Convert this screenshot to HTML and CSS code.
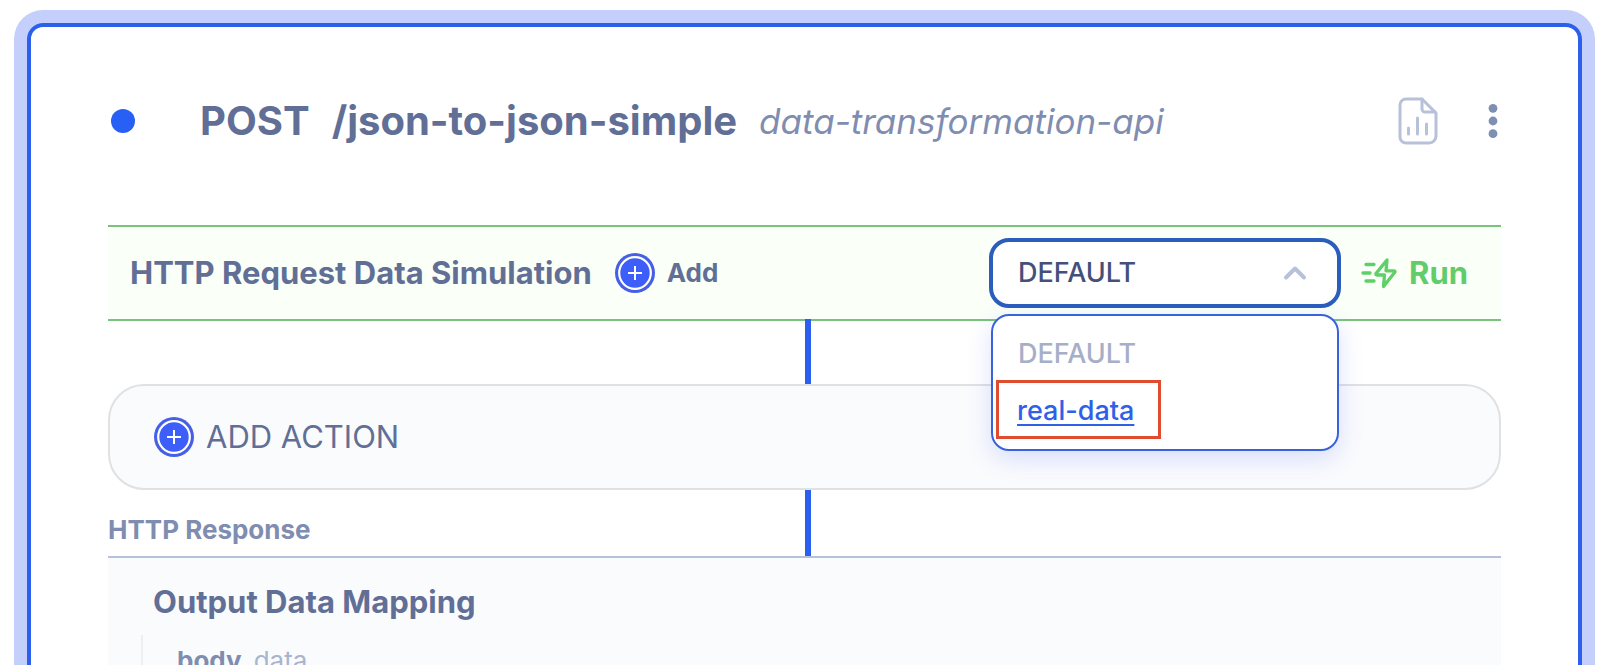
FILE: index.html
```html
<!DOCTYPE html>
<html lang="en">
<head>
<meta charset="utf-8">
<meta name="viewport" content="width=device-width, initial-scale=1">
<title>POST /json-to-json-simple</title>
<link rel="stylesheet" href="styles.css">
</head>
<body>
<main class="card">
  <header class="card-header">
    <span class="status-dot"></span>
    <h1 class="endpoint"><span>POST</span><span>/json-to-json-simple</span></h1>
    <em class="api-name">data-transformation-api</em>
    <div class="header-actions">
      <button class="icon-button" type="button" aria-label="Report">
        <svg width="40" height="48" viewBox="0 0 40 48" fill="none" stroke="#b7c1da" stroke-width="3" stroke-linecap="round" stroke-linejoin="round">
          <path d="M8 2H24L38 16V39a7 7 0 0 1-7 7H8a6 6 0 0 1-6-6V8a6 6 0 0 1 6-6Z"/>
          <path d="M24 2V12a3 3 0 0 0 3 3H37"/>
          <path d="M10.500 31V37M19.500 21V37M28.500 27V37"/>
        </svg>
      </button>
      <button class="icon-button" type="button" aria-label="More options">
        <svg width="16" height="40" viewBox="0 0 16 40" fill="#7d8fb3">
          <circle cx="8" cy="7.300" r="4.400"/><circle cx="8" cy="20" r="4.400"/><circle cx="8" cy="32.700" r="4.400"/>
        </svg>
      </button>
    </div>
  </header>

  <section class="simulation">
    <h2 class="section-title">HTTP Request Data Simulation</h2>
    <button class="add-button" type="button">
      <svg class="plus" width="40" height="40" viewBox="0 0 40 40" fill="none">
        <circle cx="20" cy="20" r="20" fill="#4560e6"/>
        <circle cx="20" cy="20" r="15.800" fill="#3d5ef8" stroke="#fff" stroke-width="2.200"/>
        <path d="M20 13V27M13 20H27" stroke="#fff" stroke-width="2"/>
      </svg>
      Add
    </button>
    <div class="picker">
      <select class="picker-select" aria-label="Data simulation">
        <option>DEFAULT</option>
        <option>real-data</option>
      </select>
      <svg class="picker-chevron" width="24" height="16" viewBox="0 0 24 16" fill="none" stroke="#b7c1da" stroke-width="4" stroke-linecap="round" stroke-linejoin="round"><path d="M3 12.500L12 3.500L21 12.500"/></svg>
      <div class="menu">
        <button class="menu-item" type="button" disabled>DEFAULT</button>
        <div class="highlight"><a class="menu-link" href="#real-data">real-data</a></div>
      </div>
    </div>
    <button class="run-button" type="button">
      <svg width="36" height="32" viewBox="0 0 36 32" fill="none" stroke="#5fd068" stroke-width="3.300" stroke-linecap="round" stroke-linejoin="round">
        <path d="M5 7.500H13M2 16H9M5 24H13"/>
        <path d="M26 3L15 16.500Q14.500 18 16 18H23.500L22.500 29.500L34 15Q34 13.800 33 13.800H25Z"/>
      </svg>
      Run
    </button>
  </section>

  <div class="link-row link-row-first"><span class="connector"></span></div>

  <button class="add-action" type="button">
    <svg class="plus" width="40" height="40" viewBox="0 0 40 40" fill="none">
      <circle cx="20" cy="20" r="20" fill="#4560e6"/>
      <circle cx="20" cy="20" r="15.800" fill="#3d5ef8" stroke="#fff" stroke-width="2.200"/>
      <path d="M20 13V27M13 20H27" stroke="#fff" stroke-width="2"/>
    </svg>
    ADD ACTION
  </button>

  <div class="link-row">
    <h2 class="response-label">HTTP Response</h2>
    <span class="connector"></span>
  </div>

  <section class="response">
    <h3 class="section-title">Output Data Mapping</h3>
    <div class="mapping"><strong>body</strong><span>data</span></div>
  </section>
</main>
</body>
</html>
```
FILE: styles.css
```css
* { box-sizing: border-box; }

body {
  height: 100vh;
  margin: 0;
  overflow: hidden;
  background: #fff;
  color: #616f96;
  font-family: Inter, "Liberation Sans", sans-serif;
}

h1, h2, h3 { margin: 0; }

button {
  padding: 0;
  border: 0;
  background: none;
  color: inherit;
  font: inherit;
  cursor: pointer;
}

svg { display: block; flex: none; }

.card {
  min-height: 100vh;
  margin: 23px 38px 0 27px;
  padding: 0 77px;
  border: 4px solid #2b5fec;
  border-radius: 16px;
  box-shadow: 0 0 0 13px #c4cffb;
}

.card-header {
  display: flex;
  align-items: center;
  height: 198px;
  padding: 0 0 10px 3px;
}

.status-dot {
  width: 24px;
  height: 24px;
  margin-right: 65px;
  border-radius: 50%;
  background: #2860f6;
}

.endpoint {
  display: flex;
  gap: 22px;
  font-size: 40px;
  font-weight: 700;
  line-height: 48px;
}

.api-name {
  margin-left: 22px;
  color: #7f8db0;
  font-size: 35px;
  font-style: oblique 10deg;
  line-height: 48px;
}

.header-actions {
  display: flex;
  align-items: center;
  gap: 47px;
  margin-left: auto;
}

.simulation {
  display: flex;
  align-items: center;
  height: 96px;
  padding: 0 33px 0 22px;
  border: solid #78c47c;
  border-width: 2px 0;
  background: #fafff8;
}

.section-title {
  font-size: 31px;
  font-weight: 700;
  line-height: 40px;
}

.add-button {
  display: flex;
  align-items: center;
  gap: 12px;
  margin-left: 23px;
  font-size: 26px;
  font-weight: 700;
  line-height: 32px;
}

.picker {
  position: relative;
  width: 352px;
  margin-left: auto;
}

.picker-select {
  display: block;
  appearance: none;
  width: 100%;
  height: 70px;
  padding: 0 25px;
  border: 4px solid #2b5dbd;
  border-radius: 20px;
  outline: 0;
  background: #fff;
  color: #43507a;
  font: 500 27px/32px Inter, "Liberation Sans", sans-serif;
}

.picker-chevron {
  position: absolute;
  top: 27px;
  right: 34px;
  pointer-events: none;
}

.menu {
  position: absolute;
  z-index: 1;
  top: calc(100% + 6px);
  right: 2px;
  left: 2px;
  display: flex;
  flex-direction: column;
  align-items: flex-start;
  padding: 22px 3px 10px;
  border: 2px solid #3863dc;
  border-radius: 18px;
  background: #fff;
  box-shadow: 0 8px 24px rgba(60, 95, 240, 0.18);
  font-size: 27px;
  font-weight: 500;
  line-height: 32px;
}

.menu-item {
  margin: 0 0 10px 22px;
  color: #a6afc7;
}

.highlight {
  padding: 12px 24px 9px 18px;
  border: 3px solid #df4c30;
}

.menu-link {
  display: block;
  color: #2f61e6;
  text-decoration: underline;
  text-decoration-thickness: 2px;
  text-underline-offset: 4px;
}

.run-button {
  display: flex;
  align-items: center;
  gap: 12px;
  margin-left: 20px;
  color: #62cc6b;
  font-size: 31px;
  font-weight: 700;
  line-height: 40px;
}

.link-row {
  display: grid;
  grid-template-columns: 50% 6px;
  align-items: center;
  height: 66px;
}

.link-row-first {
  height: 65px;
  margin-top: -2px;
}

.connector {
  grid-column: 2;
  align-self: stretch;
  background: #2b60ee;
}

.response-label {
  padding-top: 14px;
  color: #7f8db0;
  font-size: 26px;
  font-weight: 700;
  line-height: 32px;
}

.add-action {
  display: flex;
  align-items: center;
  gap: 12px;
  width: 100%;
  height: 106px;
  padding: 0 44px;
  border: 2px solid #e0e1e3;
  border-radius: 36px;
  background: #fafbfd;
  font-size: 31px;
  line-height: 40px;
}

.response {
  min-height: 200px;
  padding: 24px 33px;
  border-top: 2px solid #b7c1d9;
  background: #fafbfd;
}

.response .section-title { padding-left: 12px; }

.mapping {
  display: flex;
  gap: 12px;
  margin-top: 13px;
  padding: 10px 0 60px 34px;
  border-left: 2px solid #eceef2;
  color: #7f8db0;
  font-size: 26px;
  line-height: 32px;
}

.mapping strong { font-weight: 700; }

.mapping span { color: #a9b4cd; }
```
